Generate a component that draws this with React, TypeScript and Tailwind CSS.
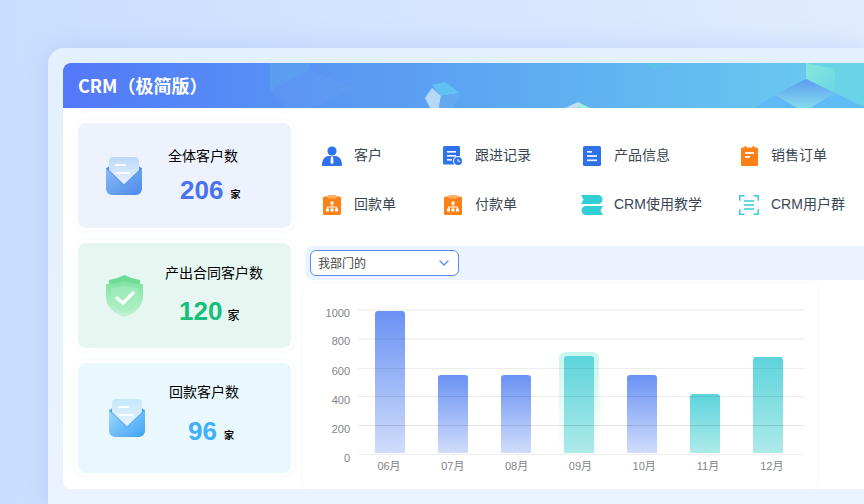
import { ChevronDown } from "lucide-react";

const cjk = "font-['Noto_Sans_CJK_SC','Noto_Sans',sans-serif]";

function Envelope({ id, from, to, paper }: { id: string; from: string; to: string; paper: string }) {
  return (
    <svg width="36" height="38" viewBox="0 0 36 38" className="shrink-0">
      <defs>
        <linearGradient id={id} x1="0" y1="0" x2="1" y2="1">
          <stop offset="0" stopColor={from} />
          <stop offset="1" stopColor={to} />
        </linearGradient>
        <linearGradient id={id + "p"} x1="0" y1="0" x2="0" y2="1">
          <stop offset="0" stopColor={paper} />
          <stop offset="1" stopColor="#e9f3ff" />
        </linearGradient>
      </defs>
      <path d="M0 14a5 5 0 0 1 5-5h26a5 5 0 0 1 5 5v10H0z" fill={to} />
      <rect x="3" y="0" width="30" height="28" rx="4" fill={`url(#${id}p)`} />
      <rect x="9" y="7" width="11" height="2" rx="1" fill="#fff" opacity="0.85" />
      <rect x="9" y="15" width="15" height="2" rx="1" fill="#fff" opacity="0.85" />
      <path d="M0 11l18 17 18-17v21a6 6 0 0 1-6 6H6a6 6 0 0 1-6-6z" fill={`url(#${id})`} />
      <path d="M0 11l18 17 18-17" fill="none" stroke={to} strokeWidth="1.200" opacity="0.7" />
    </svg>
  );
}

function Shield() {
  return (
    <svg width="37" height="42" viewBox="0 0 37 42" className="shrink-0">
      <defs>
        <linearGradient id="sh" x1="0" y1="0" x2="0" y2="1">
          <stop offset="0" stopColor="#7ee2a0" />
          <stop offset="1" stopColor="#c4f3d5" />
        </linearGradient>
      </defs>
      <path d="M3 5C9 4 14 2 18.500 0 23 2 28 4 34 5v9H3z" fill="#6fdc95" />
      <path d="M0 9c7 0 13-1 18.500-3C24 8 30 9 37 9v13c0 10-9 17-18.500 20C9 39 0 32 0 22z" fill="url(#sh)" />
      <path d="M5 13c5 0 9-1 13.500-2.500C23 12 27 13 32 13v9c0 8-6 13-13.500 16C11 35 5 30 5 22z" fill="#a4ecbd" opacity="0.7" />
      <path d="M11 23l6 5 10-10" fill="none" stroke="#fff" strokeWidth="3.400" strokeLinecap="round" strokeLinejoin="round" opacity="0.92" />
    </svg>
  );
}

function PersonIcon() {
  return (
    <svg width="20" height="20" viewBox="0 0 20 20">
      <circle cx="10" cy="5" r="4.600" fill="#2f73ec" />
      <path d="M0 20c0-6 2-9.500 6.500-10h7c4.500.5 6.500 4 6.500 10z" fill="#2f73ec" />
      <path d="M9 10.500h2l.5 6-1.500 2-1.500-2z" fill="#fff" />
    </svg>
  );
}

function RecordIcon() {
  return (
    <svg width="20" height="20" viewBox="0 0 20 20">
      <rect x="0" y="0" width="17" height="18.500" rx="1.500" fill="#2f73ec" />
      <rect x="4" y="5" width="9" height="1.600" fill="#fff" />
      <rect x="4" y="9" width="9" height="1.600" fill="#fff" />
      <rect x="4" y="13" width="5" height="1.600" fill="#fff" />
      <circle cx="15" cy="15" r="5" fill="#fff" />
      <circle cx="15" cy="15" r="4" fill="#2f73ec" />
      <path d="M15 13v2.300h2" fill="none" stroke="#fff" strokeWidth="1" />
    </svg>
  );
}

function DocIcon() {
  return (
    <svg width="18" height="20" viewBox="0 0 18 20">
      <rect width="18" height="20" rx="1.500" fill="#2f73ec" />
      <rect x="4" y="5" width="5" height="1.600" fill="#fff" />
      <rect x="4" y="9.200" width="10" height="1.600" fill="#fff" />
      <rect x="4" y="13.500" width="10" height="1.600" fill="#fff" />
    </svg>
  );
}

function NoteIcon() {
  return (
    <svg width="17" height="20" viewBox="0 0 17 20">
      <rect y="1.500" width="17" height="18.500" rx="1.500" fill="#fd8116" />
      <rect x="3.500" y="0" width="1.800" height="3.500" fill="#fd8116" />
      <rect x="11.500" y="0" width="1.800" height="3.500" fill="#fd8116" />
      <rect x="4" y="6" width="9" height="1.800" fill="#fff" />
      <rect x="4" y="10" width="5" height="1.800" fill="#fff" />
    </svg>
  );
}

function ClipIcon() {
  return (
    <svg width="18" height="20" viewBox="0 0 18 20">
      <rect y="1.500" width="18" height="18.500" rx="1.500" fill="#fd8116" />
      <rect x="4.500" y="0" width="9" height="3.500" rx="1" fill="#ffb066" />
      <rect x="7.500" y="6.500" width="3" height="3" fill="#fff" />
      <path d="M9 9.500v2.500M4.500 14v-2h9v2" fill="none" stroke="#fff" strokeWidth="1" />
      <rect x="3" y="13.500" width="3" height="3" fill="#fff" />
      <rect x="7.500" y="13.500" width="3" height="3" fill="#fff" />
      <rect x="12" y="13.500" width="3" height="3" fill="#fff" />
    </svg>
  );
}

function BookIcon() {
  return (
    <svg width="22" height="20" viewBox="0 0 22 20">
      <path d="M0 0h17a4.500 4.500 0 0 1 0 9H0l2.500-4.500z" fill="#33cdd6" />
      <path d="M22 11H5a4.500 4.500 0 0 0 0 9h17l-2.500-4.500z" fill="#33cdd6" />
    </svg>
  );
}

function GroupIcon() {
  return (
    <svg width="20" height="20" viewBox="0 0 20 20" fill="none" stroke="#33cdd6" strokeWidth="1.500">
      <path d="M5.500.8H.8v5M14.500.8h4.700v5M5.500 19.200H.8v-5M14.500 19.200h4.700v-5" />
      <path d="M5 6h10M5 10h10M5 14h10" />
    </svg>
  );
}

const stats = [
  { title: "全体客户数", value: "206", color: "text-[#4a72ee]", bg: "bg-[#edf2fc]", h: "h-[105px]", iconBox: "pl-[28px]", textBox: "pl-[26px] pb-[2px]", numBox: "pl-[12px] gap-[7px]", gap: "mt-[10px]", unit: "text-[10px] font-bold", icon: <Envelope id="e1" from="#86bdf5" to="#4f88ec" paper="#bcd9f8" /> },
  { title: "产出合同客户数", value: "120", color: "text-[#17bf7c]", bg: "bg-[#e6f7f1]", h: "h-[105px]", iconBox: "pl-[28px]", textBox: "pl-[23px] pb-[4px]", numBox: "pl-[14px] gap-[5px]", gap: "mt-[14px]", unit: "text-[12px] font-medium", icon: <Shield /> },
  { title: "回款客户数", value: "96", color: "text-[#3fb0fb]", bg: "bg-[#e9f8ff]", h: "h-[110px]", iconBox: "pl-[31px]", textBox: "pl-[27px] pb-[9px]", numBox: "pl-[19px] gap-[7px]", gap: "mt-[15px]", unit: "text-[10px] font-bold", icon: <Envelope id="e3" from="#a3d8fb" to="#3da3f7" paper="#c5e7fc" /> },
];

const menu = [
  { label: "客户", icon: <PersonIcon /> },
  { label: "跟进记录", icon: <RecordIcon /> },
  { label: "产品信息", icon: <DocIcon /> },
  { label: "销售订单", icon: <NoteIcon /> },
  { label: "回款单", icon: <ClipIcon /> },
  { label: "付款单", icon: <ClipIcon /> },
  { label: "CRM使用教学", icon: <BookIcon /> },
  { label: "CRM用户群", icon: <GroupIcon /> },
];

const bars = [
  { m: "06月", x: 73, top: 28, kind: "b" },
  { m: "07月", x: 136, top: 92, kind: "b" },
  { m: "08月", x: 199, top: 92, kind: "b" },
  { m: "09月", x: 262, top: 73, kind: "t" },
  { m: "10月", x: 325, top: 92, kind: "b" },
  { m: "11月", x: 388, top: 111, kind: "t" },
  { m: "12月", x: 451, top: 74, kind: "t" },
];

const ticks = [
  { v: "1000", y: 26, ly: 30, w: 2, c: "#0000000b" },
  { v: "800", y: 55, ly: 58, w: 2, c: "#0000000b" },
  { v: "600", y: 85, ly: 88, w: 1, c: "#00000012" },
  { v: "400", y: 113, ly: 117, w: 1, c: "#00000014" },
  { v: "200", y: 142, ly: 146, w: 1, c: "#0000001c" },
  { v: "0", y: 171, ly: 175, w: 1, c: "#0000000f" },
];

function Chart() {
  return (
    <svg width="516" height="206" viewBox="0 0 516 206" className="block">
      <defs>
        <linearGradient id="bb" x1="0" y1="0" x2="0" y2="1">
          <stop offset="0" stopColor="#6a92f4" />
          <stop offset="1" stopColor="#d0ddfb" />
        </linearGradient>
        <linearGradient id="bt" x1="0" y1="0" x2="0" y2="1">
          <stop offset="0" stopColor="#5dd4dc" />
          <stop offset="1" stopColor="#aeeaea" />
        </linearGradient>
        <linearGradient id="glow" x1="0" y1="0" x2="0" y2="1">
          <stop offset="0" stopColor="#c8f6ee" />
          <stop offset="1" stopColor="#ffffff" />
        </linearGradient>
      </defs>
      <path d="M257 172V75a6 6 0 0 1 6-6h28a6 6 0 0 1 6 6v97z" fill="url(#glow)" />
      {bars.map((b) => (
        <path
          key={b.m}
          d={`M${b.x} 170V${b.top + 3}a3 3 0 0 1 3-3h24a3 3 0 0 1 3 3V170z`}
          fill={b.kind === "b" ? "url(#bb)" : "url(#bt)"}
        />
      ))}
      {ticks.map((t) => (
        <g key={t.v}>
          <rect x="56" y={t.y} width="447" height={t.w} fill={t.c} />
          <text x="48" y={t.ly + 4} textAnchor="end" fontSize="11" fill="#808489" fontFamily="Liberation Sans, sans-serif">
            {t.v}
          </text>
        </g>
      ))}
      {bars.map((b, i) => (
        <g key={b.m + "l"}>
          <rect x={87.5 + i * 63.8} y="171" width="1" height="3" fill="#e8e8ea" />
          <text x={87 + i * 63.8} y="187" textAnchor="middle" fontSize="11" fill="#808489" fontFamily="Liberation Sans, Noto Sans CJK SC, sans-serif">
            {b.m}
          </text>
        </g>
      ))}
    </svg>
  );
}

function BannerArt() {
  return (
    <svg width="801" height="45" viewBox="0 0 801 45" className="absolute left-0 top-0">
      <defs>
        <linearGradient id="dia" x1="0" y1="0" x2="0" y2="1">
          <stop offset="0" stopColor="#5b9cf0" />
          <stop offset="1" stopColor="#84dcec" />
        </linearGradient>
        <linearGradient id="mint" x1="0" y1="0" x2="1" y2="1">
          <stop offset="0" stopColor="#86e8dc" />
          <stop offset="1" stopColor="#6cd5e6" />
        </linearGradient>
      </defs>
      <polygon points="207,28 247,7 292,25 250,45 225,45" fill="#ffffff" opacity="0.03" />
      <polygon points="207,0 247,0 247,7 207,28" fill="#66c0e8" opacity="0.25" />
      <polygon points="369,22 382,19 397,30 378,33" fill="#63c0f5" />
      <polygon points="362,35 369,25 378,33 376,45 367,45" fill="#b5d8f6" />
      <polygon points="378,33 397,30 390,45 376,45" fill="#62a9f0" />
      <polygon points="502,45 515,39 515,45" fill="#c5dcf5" />
      <polygon points="515,39 527,45 515,45" fill="#9fecdc" />
      <polygon points="582,0 612,0 603,4 590,6" fill="#5fc4ea" opacity="0.8" />
      <polygon points="743,0 801,0 801,44 743,16" fill="#6ad3e8" />
      <polygon points="743,0 772,6 772,30 743,16" fill="url(#mint)" />
      <polygon points="743,16 772,30 747,45 734,45 712,32" fill="url(#dia)" />
      <polygon points="712,32 734,45 691,45" fill="#60b8f5" />
      <polygon points="772,30 801,44 801,45 747,45" fill="#60bcf5" />
    </svg>
  );
}

export default function App() {
  return (
    <div className={`h-[504px] w-[864px] overflow-hidden bg-gradient-to-r from-[#c9defe] to-[#e0ecff] pl-12 pt-12 ${cjk}`}>
      <div className="h-[456px] rounded-tl-2xl bg-gradient-to-b from-[#e3f0fd] to-[#eaf3fe] pb-[15px] pl-[15px] pt-[15px] shadow-[0_0_24px_rgba(120,160,235,0.25)]">
        <div className="flex h-[426px] flex-col overflow-hidden rounded-l-lg bg-white">
          <div className="relative h-[45px] shrink-0 bg-gradient-to-r from-[#5378f8] via-[#5ca5f1] to-[#6bcdf0]">
            <BannerArt />
            <div className="relative pl-[15px] text-[18px] font-semibold leading-[45px] text-white">CRM（极简版）</div>
          </div>
          <div className="flex min-h-0 flex-1">
            <div className="flex w-[239px] shrink-0 flex-col gap-[15px] pl-[15px] pt-[15px]">
              {stats.map((s) => (
                <div key={s.title} className={`flex w-[213px] items-center rounded-lg shadow-[0_0_0_3px_#ffffff,0_0_5px_3px_#f2f5fa] ${s.bg} ${s.h}`}>
                  <div className={`w-[64px] shrink-0 ${s.iconBox}`}>{s.icon}</div>
                  <div className={s.textBox}>
                    <div className="whitespace-nowrap text-[14px] leading-5 text-black">{s.title}</div>
                    <div className={`flex items-end ${s.gap} ${s.numBox}`}>
                      <span className={`font-['Liberation_Sans',sans-serif] text-[26px] font-bold leading-[30px] ${s.color}`}>{s.value}</span>
                      <span className={`pb-[3px] leading-4 text-black ${s.unit}`}>家</span>
                    </div>
                  </div>
                </div>
              ))}
            </div>
            <div className="min-w-0 flex-1">
              <div className="grid grid-cols-[121px_139px_157px_1fr] pl-[19px] pt-[23px]">
                {menu.map((item) => (
                  <div key={item.label} className="flex h-[49px] items-center gap-[11px]">
                    <div className="flex w-[22px] justify-center">{item.icon}</div>
                    <span className="whitespace-nowrap font-['Liberation_Sans','Noto_Sans_CJK_SC',sans-serif] text-[14px] text-[#3a4654]">{item.label}</span>
                  </div>
                ))}
              </div>
              <div className="ml-[3px] mt-[17px] h-[34px] rounded-l-lg bg-[#ebf3fe] pl-[5px] pt-[4px]">
                <div className="flex h-[26px] w-[149px] items-center justify-between rounded-md border-[1.5px] border-[#5f88f3] bg-white pl-[7px] pr-[6px] text-[12px] text-[#444]">
                  <span>我部门的</span>
                  <ChevronDown size={16} strokeWidth={2} className="text-[#5f88f3]" />
                </div>
              </div>
              <div className="mt-[3px] h-[206px] w-[516px] rounded-lg shadow-[0_0_0_1px_#f6f8fc]">
                <Chart />
              </div>
            </div>
          </div>
        </div>
      </div>
    </div>
  );
}
